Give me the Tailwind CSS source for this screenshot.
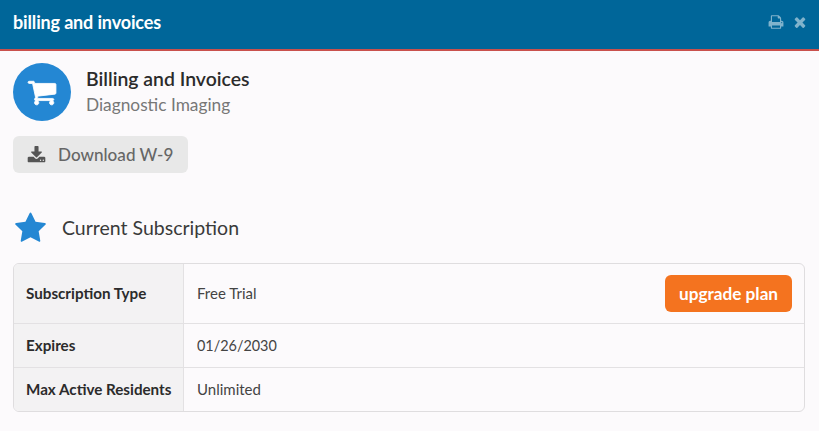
<!DOCTYPE html>
<html>
  <head>
    <title>billing and invoices</title>
    <meta charset="UTF-8" />
    <script src="https://cdn.jsdelivr.net/npm/@tailwindcss/browser@4"></script>
  </head>
  <body class="bg-[#fcfafc] font-['Lato',sans-serif] overflow-hidden">
    <div class="w-[819px] h-[431px]">
      <div class="h-[51px] bg-[#006699] border-b-2 border-[#c9504c] flex items-center justify-between pl-[13px] pr-[11px]">
        <h1 class="text-white font-bold text-[18px] tracking-[-0.15px] mb-[5px]">billing and invoices</h1>
        <div class="flex items-center gap-[8px] mb-[5px] text-white/50">
          <svg class="w-[16px] h-[16px] fill-current" viewBox="0 0 1792 1792"><path d="M448 1536h896v-256h-896v256zm0-640h896v-384h-160q-40 0-68-28t-28-68v-160h-640v640zm1152 64q0-26-19-45t-45-19-45 19-19 45 19 45 45 19 45-19 19-45zm128 0v416q0 13-9.500 22.500t-22.500 9.500h-224v160q0 40-28 68t-68 28h-960q-40 0-68-28t-28-68v-160h-224q-13 0-22.500-9.500t-9.500-22.500v-416q0-79 56.500-135.500t135.500-56.500h64v-544q0-40 28-68t68-28h672q40 0 88 20t76 48l152 152q28 28 48 76t20 88v256h64q79 0 135.500 56.500t56.500 135.500z"/></svg>
          <svg class="w-[16px] h-[16px] fill-current" viewBox="0 0 1792 1792"><path d="M1490 1322q0 40-28 68l-136 136q-28 28-68 28t-68-28l-294-294-294 294q-28 28-68 28t-68-28l-136-136q-28-28-28-68t28-68l294-294-294-294q-28-28-28-68t28-68l136-136q28-28 68-28t68 28l294 294 294-294q28-28 68-28t68 28l136 136q28 28 28 68t-28 68l-294 294 294 294q28 28 28 68z"/></svg>
        </div>
      </div>

      <div class="px-[13px] pt-[12px]">
        <div class="flex items-center gap-[15px]">
          <div class="w-[58px] h-[58px] rounded-full bg-[#2487d3] flex items-center justify-center">
            <svg class="w-[30px] h-[30px] fill-white stroke-white stroke-[50]" viewBox="0 0 1792 1792"><path d="M704 1536q0 52-38 90t-90 38-90-38-38-90 38-90 90-38 90 38 38 90zm896 0q0 52-38 90t-90 38-90-38-38-90 38-90 90-38 90 38 38 90zm128-1088v512q0 24-16.500 42.500t-40.500 21.500l-1044 122q13 60 13 70 0 16-24 64h920q26 0 45 19t19 45-19 45-45 19h-1024q-26 0-45-19t-19-45q0-11 8-31.500t16-36 21.500-40 15.500-29.500l-177-823h-204q-26 0-45-19t-19-45 19-45 45-19h256q16 0 28.500 6.500t19.500 15.500 13 24.500 8 26 5.500 29.500 4.500 26h1201q26 0 45 19t19 45z"/></svg>
          </div>
          <div class="flex flex-col">
            <div class="text-[19.4px] leading-[26px] font-semibold text-[#2b2b2b]">Billing and Invoices</div>
            <div class="text-[17.3px] leading-[26px] text-[#777]">Diagnostic Imaging</div>
          </div>
        </div>

        <button class="mt-[15px] h-[37px] w-[175px] rounded-[6px] bg-[#e8e8e8] flex items-center pl-[14px] text-[#666] text-[17.1px] font-medium">
          <svg class="w-[19px] h-[19px] fill-[#555] mr-[12px] mt-[1px]" viewBox="0 0 1792 1792"><path d="M1344 1344q0-26-19-45t-45-19-45 19-19 45 19 45 45 19 45-19 19-45zm256 0q0-26-19-45t-45-19-45 19-19 45 19 45 45 19 45-19 19-45zm128-224v320q0 40-28 68t-68 28h-1472q-40 0-68-28t-28-68v-320q0-40 28-68t68-28h465l135 136q58 56 136 56t136-56l136-136h464q40 0 68 28t28 68zm-325-569q17 41-14 70l-448 448q-18 19-45 19t-45-19l-448-448q-31-29-14-70 17-39 59-39h256v-448q0-26 19-45t45-19h256q26 0 45 19t19 45v448h256q42 0 59 39z"/></svg>
          Download W-9
        </button>

        <div class="mt-[36px] flex items-center h-[38px]">
          <svg class="w-[33px] h-[33px] fill-[#2487d3] ml-[1px]" viewBox="0 0 1792 1792"><path d="M1728 647q0 22-26 48l-363 354 86 500q1 7 1 20 0 21-10.500 35.500t-30.500 14.500q-19 0-40-12l-449-236-449 236q-22 12-40 12-21 0-31.500-14.500t-10.500-35.500q0-6 2-20l86-500-364-354q-25-27-25-48 0-37 56-46l502-73 225-455q19-41 49-41t49 41l225 455 502 73q56 9 56 46z"/></svg>
          <h2 class="ml-[15px] text-[19.5px] text-[#3a3a3a]">Current Subscription</h2>
        </div>

        <div class="mt-[16px] w-[792px] border border-[#dfdddf] rounded-[6px] overflow-hidden text-[15px] text-[#444]">
          <div class="flex h-[60px] border-b border-[#e3e1e3]">
            <div class="w-[170px] bg-[#f3f2f3] border-r border-[#e3e1e3] pl-[12px] flex items-center font-bold text-[#2b2b2b] text-[15.2px]">Subscription Type</div>
            <div class="flex-1 pl-[13px] pr-[12px] flex items-center justify-between">
              <span>Free Trial</span>
              <button class="w-[127px] h-[37px] rounded-[6px] bg-[#f4731f] text-white font-bold text-[17.2px]">upgrade plan</button>
            </div>
          </div>
          <div class="flex h-[44px] border-b border-[#e3e1e3]">
            <div class="w-[170px] bg-[#f3f2f3] border-r border-[#e3e1e3] pl-[12px] flex items-center font-bold text-[#2b2b2b] text-[15.2px]">Expires</div>
            <div class="flex-1 pl-[13px] flex items-center text-[14.4px]">01/26/2030</div>
          </div>
          <div class="flex h-[43px]">
            <div class="w-[170px] bg-[#f3f2f3] border-r border-[#e3e1e3] pl-[12px] flex items-center font-bold text-[#2b2b2b] text-[15.2px]">Max Active Residents</div>
            <div class="flex-1 pl-[13px] flex items-center">Unlimited</div>
          </div>
        </div>
      </div>
    </div>
  </body>
</html>
